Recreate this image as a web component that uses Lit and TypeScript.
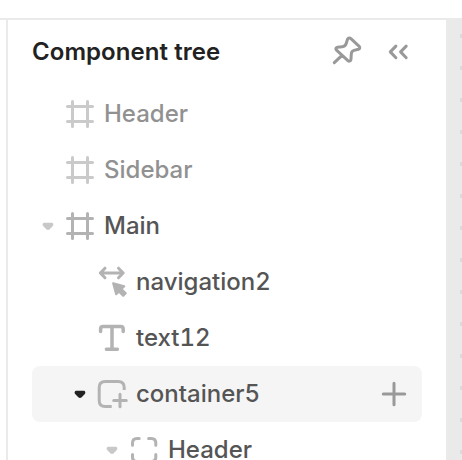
import { LitElement, html, svg, css, nothing } from "lit";
import { customElement, property } from "lit/decorators.js";
import { classMap } from "lit/directives/class-map.js";

type IconName = "frame" | "navigation" | "text" | "container" | "slot" | "pin" | "collapse" | "plus" | "caret";

const glyphs = {
  frame: svg`<path d="M8.5 3.5V28.5M23.5 3.5V28.5M3.5 8.5H28.5M3.5 23.5H28.5"/>`,
  navigation: svg`<path d="M4.5 7H27M9 2.2L4.3 7L9 11.8M22.5 2.2L27.2 7L22.5 11.8"/>
    <path class="solid" d="M17.2 17.2L28.2 20.2L25.4 23L29.7 27.3L27.2 29.8L22.9 25.5L20.2 28.2Z"/>`,
  text: svg`<path class="bold" d="M4.6 9.6V7Q4.6 4.5 7.1 4.5H24.7Q27.2 4.5 27.2 7V9.6M16 4.5V27.2M10.4 27.2H21.4"/>`,
  container: svg`<path class="butt" d="M28.2 12V9.5Q28.2 3.5 22.2 3.5H9.2Q3.2 3.5 3.2 9.5V22.5Q3.2 28.5 9.2 28.5H15.7"/>
    <path d="M24 16.2V28.8M17.7 22.5H30.3"/>`,
  slot: svg`<path d="M4.5 11.2V9Q4.5 4.5 9 4.5H11.2M20.6 4.5H23.3Q27.8 4.5 27.8 9V11.2M27.8 20.6V23Q27.8 27.5 23.3 27.5H20.6M11.2 27.5H9Q4.5 27.5 4.5 23V20.6"/>`,
  pin: svg`<path d="M16.6 5C17.3 3.9 19 3.8 19.9 4.7L28.2 12.3C29.2 13.3 28.8 14.9 27.4 15.3L23 16.4C21 17 20.4 18.1 20.3 20L20 25.2C19.9 27 18.2 27.7 16.9 26.6L5.5 16.2C4.3 15 4.9 13.4 6.5 13.2L11.3 12.7C13.3 12.5 14.6 11.5 15.2 9.5ZM3.3 28.7L11 21.3"/>`,
  collapse: svg`<path d="M12.9 12.1L7.3 17.9L12.9 23.7M23.2 12.1L17.6 17.9L23.2 23.7"/>`,
  plus: svg`<path d="M16 5.3V26.7M5.3 16H26.7"/>`,
  caret: svg`<path class="fill" d="M12.6 12.7H19.4C21.4 12.7 22 14.9 20.6 16.3L17.7 19.2Q16 20.7 14.3 19.2L11.4 16.3C10 14.9 10.6 12.7 12.6 12.7Z"/>`,
};

@customElement("tree-icon")
class TreeIcon extends LitElement {
  @property() name: IconName = "frame";

  static styles = css`
    :host { display: block; width: 32px; height: 32px; flex: none; }
    svg { display: block; width: 32px; height: 32px; overflow: visible; fill: none;
      stroke: currentColor; stroke-width: 3; stroke-linecap: round; stroke-linejoin: round; }
    .solid { fill: currentColor; stroke-width: 2.2; }
    .bold { stroke-width: 3.5; }
    .fill { fill: currentColor; stroke: none; }
    .butt { stroke-linecap: butt; }
  `;

  render() {
    return html`<svg viewBox="0 0 32 32" aria-hidden="true">${glyphs[this.name]}</svg>`;
  }
}

interface TreeNode {
  label: string;
  icon: IconName;
  depth: number;
  expandable?: boolean;
  muted?: boolean;
  selected?: boolean;
}

const nodes: TreeNode[] = [
  { label: "Header", icon: "frame", depth: 0, muted: true },
  { label: "Sidebar", icon: "frame", depth: 0, muted: true },
  { label: "Main", icon: "frame", depth: 0, expandable: true },
  { label: "navigation2", icon: "navigation", depth: 1 },
  { label: "text12", icon: "text", depth: 1 },
  { label: "container5", icon: "container", depth: 1, expandable: true, selected: true },
  { label: "Header", icon: "slot", depth: 2, expandable: true },
];

@customElement("app-root")
class AppRoot extends LitElement {
  static styles = css`
    :host { display: flex; flex-direction: column; height: 100vh; overflow: hidden;
      background: #fff; font-family: Inter, sans-serif; }
    .topbar { flex: none; height: 18px; border-bottom: 2px solid #eaeaea; }
    .body { flex: 1; min-height: 0; display: flex; }
    .rail { width: 6px; flex: none; border-right: 2px solid #eaeaea; }
    .panel { width: 390px; flex: none; padding: 0 24px; overflow: hidden; }
    .canvas { flex: 1; background: radial-gradient(circle at 16px 16px, #dadada 2px, transparent 2.5px) 0 0 / 32px 32px #eaeaea; }
    .head { display: flex; align-items: center; height: 66px; }
    .title { flex: 1; margin: -3px 0 0; font-size: 24px; line-height: 32px; font-weight: 600;
      letter-spacing: 0.06px; color: #222; }
    .tools { display: flex; gap: 20px; color: #999; margin: -6px 7px 0 0; }
    .row { display: flex; align-items: center; height: 56px; border-radius: 8px; color: #555; }
    .row.selected { background: #f5f5f5; }
    .row.muted { color: #919191; }
    .indent, .gutter { width: 32px; height: 32px; flex: none; }
    .gutter { color: #c8c8c8; }
    .selected .gutter { color: #222; }
    .kind { color: #b3b3b3; }
    .muted .kind { color: #cacaca; }
    .label { flex: 1; margin-left: 8px; font-size: 24px; line-height: 32px; font-weight: 500;
      font-variant-numeric: tabular-nums; }
    .add { color: #999; margin-right: 12px; }
  `;

  private row(n: TreeNode) {
    return html`
      <div class=${classMap({ row: true, muted: !!n.muted, selected: !!n.selected })} role="treeitem">
        ${Array.from({ length: n.depth }, () => html`<span class="indent"></span>`)}
        <span class="gutter">${n.expandable ? html`<tree-icon name="caret"></tree-icon>` : nothing}</span>
        <tree-icon class="kind" name=${n.icon}></tree-icon>
        <span class="label">${n.label}</span>
        ${n.selected ? html`<tree-icon class="add" name="plus"></tree-icon>` : nothing}
      </div>
    `;
  }

  render() {
    return html`
      <div class="topbar"></div>
      <div class="body">
        <div class="rail"></div>
        <section class="panel">
          <header class="head">
            <h2 class="title">Component tree</h2>
            <div class="tools">
              <tree-icon name="pin"></tree-icon>
              <tree-icon name="collapse"></tree-icon>
            </div>
          </header>
          <div role="tree">${nodes.map((n) => this.row(n))}</div>
        </section>
        <div class="canvas"></div>
      </div>
    `;
  }
}
